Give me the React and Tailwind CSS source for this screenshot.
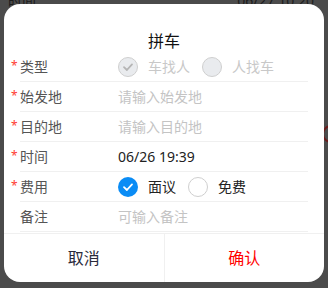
import React from "react";

const font = { fontFamily: '"Noto Sans", "Noto Sans CJK SC", sans-serif' };

function Check({ color }) {
  return (
    <svg width="12" height="12" viewBox="0 0 12 12" fill="none">
      <path d="M2 6.2 L4.9 9 L10 3.4" stroke={color} strokeWidth="1.8" strokeLinecap="round" strokeLinejoin="round" />
    </svg>
  );
}

function Row({ label, required = true, children }) {
  return (
    <div className="relative flex h-[30px] items-center border-b border-[#f0f0f0]">
      {required && (
        <span className="absolute left-[-9px] top-[8px] text-[12px] leading-[12px] text-[#ff3b30]">*</span>
      )}
      <div className="w-[98px] text-[14px] text-[#555]">{label}</div>
      <div className="flex flex-1 items-center text-[14px]">{children}</div>
    </div>
  );
}

export default function App() {
  return (
    <div className="relative h-[288px] w-[328px] overflow-hidden bg-[#4b4b4b]" style={font}>
      <div className="mt-[-10px] flex items-center justify-between px-[8px] text-[14px] text-[#1c1c1c]">
        <span>时间</span>
        <span className="mr-[6px]">06/27 10:20</span>
      </div>
      <div className="absolute left-[322px] top-[125px] h-[18px] w-[18px] rounded-full border-2 border-[#6b1a1a]" />

      <div className="absolute left-[4px] top-[4px] flex h-[278px] w-[320px] flex-col overflow-hidden rounded-[16px] bg-white">
        <div className="h-[48px] pt-[26px] text-center text-[16px] leading-[22px] text-[#111]">拼车</div>
        <div className="mx-[16px] flex flex-col">
          <Row label="类型">
            <span className="flex h-[20px] w-[20px] items-center justify-center rounded-full border border-[#cfcfcf] bg-[#e9ebee]">
              <Check color="#b5b5b5" />
            </span>
            <span className="ml-[10px] text-[#c8c8c8]">车找人</span>
            <span className="ml-[12px] h-[20px] w-[20px] rounded-full border border-[#cfcfcf] bg-[#e9ebee]" />
            <span className="ml-[10px] text-[#c8c8c8]">人找车</span>
          </Row>
          <Row label="始发地">
            <span className="text-[#c4c4c4]">请输入始发地</span>
          </Row>
          <Row label="目的地">
            <span className="text-[#c4c4c4]">请输入目的地</span>
          </Row>
          <Row label="时间">
            <span className="text-[#222]">06/26 19:39</span>
          </Row>
          <Row label="费用">
            <span className="flex h-[20px] w-[20px] items-center justify-center rounded-full bg-[#0a8cf5]">
              <Check color="#ffffff" />
            </span>
            <span className="ml-[10px] text-[#222]">面议</span>
            <span className="ml-[12px] h-[20px] w-[20px] rounded-full border border-[#cfcfcf] bg-white" />
            <span className="ml-[10px] text-[#222]">免费</span>
          </Row>
          <Row label="备注" required={false}>
            <span className="text-[#c4c4c4]">可输入备注</span>
          </Row>
        </div>
        <div className="mt-[1px] flex flex-1 border-t border-[#f0f0f0]">
          <div className="flex flex-1 items-center justify-center border-r border-[#f0f0f0] text-[16px] text-[#2a2a3a]">取消</div>
          <div className="flex flex-1 items-center justify-center text-[16px] text-[#ff0000]">确认</div>
        </div>
      </div>
    </div>
  );
}
